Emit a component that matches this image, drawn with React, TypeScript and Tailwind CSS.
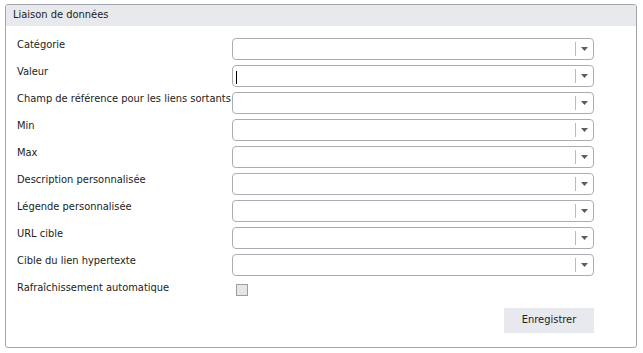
const FIELDS = [
  "Catégorie",
  "Valeur",
  "Champ de référence pour les liens sortants",
  "Min",
  "Max",
  "Description personnalisée",
  "Légende personnalisée",
  "URL cible",
  "Cible du lien hypertexte",
];

function ComboBox({ focused }: { focused?: boolean }) {
  return (
    <div className="flex h-[22px] w-[362px] items-stretch rounded-[4px] border border-[#a9adb3] bg-white">
      <div className="relative flex-1">
        {focused && <span className="absolute left-[3px] top-[5px] h-[13px] w-px bg-black" />}
      </div>
      <div className="my-[3px] w-px bg-[#b8bcc2]" />
      <div className="flex w-[17px] items-center justify-center">
        <svg width="7" height="4" viewBox="0 0 7 4">
          <path d="M0 0 H7 L3.5 4 Z" fill="#5a5d62" />
        </svg>
      </div>
    </div>
  );
}

export default function App() {
  return (
    <div className="h-[353px] w-[643px] bg-white pt-[4px] pl-[5px] font-['DejaVu_Sans_Condensed','DejaVu_Sans',sans-serif] text-[11px] text-[#222]">
      <div className="flex h-[344px] w-[632px] flex-col overflow-hidden rounded-[3px] border border-[#a0a4ab] bg-white">
        <div className="flex h-[21px] items-center bg-[#e8e9ed] pl-[7px]">Liaison de données</div>
        <div className="flex flex-col gap-[5px] pl-[11px] pt-[12px]">
          {FIELDS.map((label, i) => (
            <div key={label} className="flex items-start">
              <div className="w-[215px] whitespace-nowrap leading-[13px]">{label}</div>
              <ComboBox focused={i === 1} />
            </div>
          ))}
          <div className="flex items-start">
            <div className="w-[215px] whitespace-nowrap leading-[13px]">Rafraîchissement automatique</div>
            <div className="ml-[4px] mt-[3px] h-[12px] w-[12px] border border-[#9a9da3] bg-[#e6e6e6]" />
          </div>
        </div>
        <div className="flex justify-end pr-[42px] pt-[12px]">
          <button className="h-[25px] w-[90px] bg-[#e8e9ee] text-[11px] text-[#222]">Enregistrer</button>
        </div>
      </div>
    </div>
  );
}
